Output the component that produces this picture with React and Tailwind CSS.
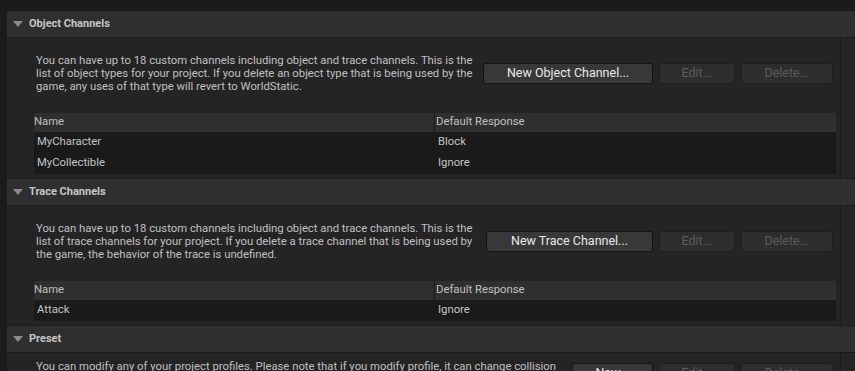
import React from "react";

const objectChannels = [
  { name: "MyCharacter", response: "Block" },
  { name: "MyCollectible", response: "Ignore" },
];

const traceChannels = [{ name: "Attack", response: "Ignore" }];

function SectionHeader({ title }) {
  return (
    <div className="flex h-[27px] items-center border-b border-[#1a1a1a] bg-[#2f2f2f] pl-[6px]">
      <svg width="10" height="6" viewBox="0 0 10 6" className="mr-[6px]">
        <path d="M0 0 L10 0 L5 6 Z" fill="#8b8b8b" />
      </svg>
      <span className="text-[11px] font-bold text-[#c6c6c6]">{title}</span>
    </div>
  );
}

function Btn({ label, width, disabled }) {
  return (
    <div
      className={`flex h-[21px] items-center justify-center rounded-[3px] border text-[12.5px] ${
        disabled
          ? "border-[#1e1e1e] bg-[#2e2e2e] text-[#5c5c5c]"
          : "border-[#141414] bg-[#383838] text-[#e8e8e8]"
      }`}
      style={{ width }}
    >
      {label}
    </div>
  );
}

function ChannelTable({ rows }) {
  return (
    <div className="w-[802px] bg-[#1a1a1a]">
      <div className="flex h-[19px] items-center bg-[#2f2f2f] text-[11.3px] text-[#c0c0c0]">
        <div className="flex h-full w-[401px] items-center border-r border-[#1a1a1a]">Name</div>
        <div className="pl-[1px]">Default Response</div>
      </div>
      {rows.map((r) => (
        <div key={r.name} className="flex h-[21px] items-center text-[11.3px] text-[#c4c4c4]">
          <div className="w-[401px] pl-[3px]">{r.name}</div>
          <div className="pl-[3px]">{r.response}</div>
        </div>
      ))}
    </div>
  );
}

function Section({ title, lines, newLabel, newWidth, rows, pt = "pt-[16px]" }) {
  return (
    <div>
      <SectionHeader title={title} />
      <div className="flex border-b border-[#1a1a1a] bg-[#242424]">
        <div className={`w-[834px] border-r border-[#1a1a1a] pb-[4px] pl-[27px] ${pt}`}>
          <div className="flex w-[802px] items-center justify-between">
            <div className="pl-[2px] text-[11.3px] leading-[13px] whitespace-nowrap text-[#c0c0c0]">
              {lines.map((l, i) => (
                <div key={i}>{l}</div>
              ))}
            </div>
            <div className="mr-[3px] flex gap-[6px]">
              <Btn label={newLabel} width={newWidth} />
              <Btn label="Edit..." width={76} disabled />
              <Btn label="Delete..." width={92} disabled />
            </div>
          </div>
          {rows && (
            <div className="mt-[20px]">
              <ChannelTable rows={rows} />
            </div>
          )}
        </div>
        <div className="flex-1 bg-[#252525]" />
      </div>
    </div>
  );
}

export default function App() {
  return (
    <div
      className="flex h-[371px] w-[855px] overflow-hidden bg-[#1b1b1b] pt-[11px] pl-[7px]"
      style={{ fontFamily: "Roboto, 'Noto Sans', sans-serif" }}
    >
      <div className="w-[848px]">
        <Section
          title="Object Channels"
          lines={[
            "You can have up to 18 custom channels including object and trace channels. This is the",
            "list of object types for your project. If you delete an object type that is being used by the",
            "game, any uses of that type will revert to WorldStatic.",
          ]}
          newLabel="New Object Channel..."
          newWidth={170}
          rows={objectChannels}
        />
        <Section
          title="Trace Channels"
          lines={[
            "You can have up to 18 custom channels including object and trace channels. This is the",
            "list of trace channels for your project. If you delete a trace channel that is being used by",
            "the game, the behavior of the trace is undefined.",
          ]}
          newLabel="New Trace Channel..."
          newWidth={167}
          rows={traceChannels}
        />
        <Section
          title="Preset"
          lines={[
            "You can modify any of your project profiles. Please note that if you modify profile, it can change collision",
            "behavior. Please be careful when you change currently existing (used) profiles.",
          ]}
          newLabel="New..."
          newWidth={81}
          pt="pt-[7px]"
        />
      </div>
    </div>
  );
}
